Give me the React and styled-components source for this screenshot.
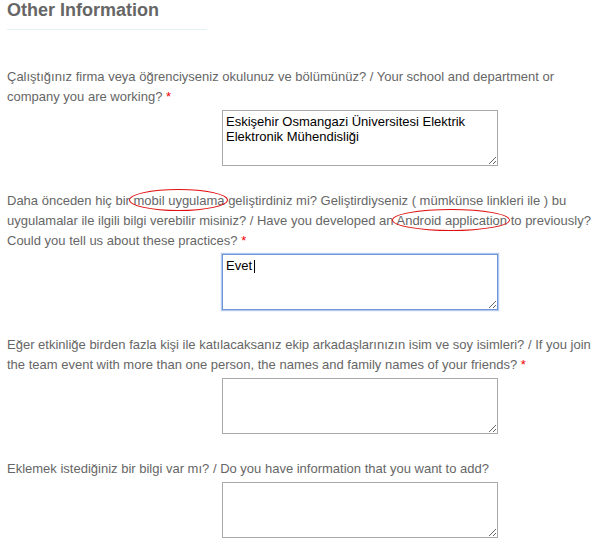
import React from 'react';
import styled, { createGlobalStyle, css } from 'styled-components';

const GlobalStyle = createGlobalStyle`
  html, body {
    margin: 0;
    padding: 0;
    background: #fff;
  }
  body {
    font-family: "Liberation Sans", Arial, sans-serif;
  }
`;

const Section = styled.section`
  padding: 0 8px 0 7px;
  width: 590px;
`;

const Heading = styled.h2`
  margin: 0;
  width: 200px;
  padding-bottom: 8px;
  border-bottom: 1px solid #e3f1f7;
  font-size: 18px;
  line-height: 21px;
  font-weight: bold;
  color: #666;
`;

const Form = styled.form`
  display: flex;
  flex-direction: column;
  gap: 25px;
  margin-top: 37px;
`;

const Question = styled.div`
  display: flex;
  flex-direction: column;
  gap: 3px;
`;

const Label = styled.label`
  font-size: 13px;
  line-height: 20px;
  color: #666;
`;

const Required = styled.span`
  color: #e00;
`;

// red hand-drawn style ring around a phrase
const Marked = styled.span`
  position: relative;

  &::after {
    content: '';
    position: absolute;
    top: -4px;
    bottom: -3px;
    left: -4px;
    right: -3px;
    border: 1px solid #e01010;
    border-radius: 50%;
    pointer-events: none;
  }
`;

const FieldWrap = styled.div`
  position: relative;
  margin-left: 215px;
  width: 276px;
  height: 56px;
`;

const TextArea = styled.textarea`
  box-sizing: border-box;
  display: block;
  width: 100%;
  height: 100%;
  margin: 0;
  padding: 3px;
  border: 1px solid #a8a8a8;
  border-radius: 0;
  font-family: "Liberation Sans", Arial, sans-serif;
  font-size: 13px;
  line-height: 15px;
  color: #000;
  background: #fff;
  outline: none;
  resize: both;

  ${(p) =>
    p.$focused &&
    css`
      border-color: #6f96d6;
      box-shadow: 0 0 1px 1px #b3c9ee;
    `}
`;

const Caret = styled.span`
  position: absolute;
  top: 6px;
  left: ${(p) => p.$x}px;
  width: 1px;
  height: 13px;
  background: #000;
`;

const questions = [
  {
    label: (
      <>
        Çalıştığınız firma veya öğrenciyseniz okulunuz ve bölümünüz? / Your school and department or company you are working?
      </>
    ),
    required: true,
    value: 'Eskişehir Osmangazi Üniversitesi Elektrik Elektronik Mühendisliği',
  },
  {
    label: (
      <>
        Daha önceden hiç bir <Marked>mobil uygulama</Marked> geliştirdiniz mi? Geliştirdiyseniz ( mümkünse linkleri ile ) bu
        uygulamalar ile ilgili bilgi verebilir misiniz? / Have you developed an <Marked>Android application</Marked> to
        previously? Could you tell us about these practices?
      </>
    ),
    required: true,
    value: 'Evet',
    focused: true,
  },
  {
    label: (
      <>
        Eğer etkinliğe birden fazla kişi ile katılacaksanız ekip arkadaşlarınızın isim ve soy isimleri? / If you join the
        team event with more than one person, the names and family names of your friends?
      </>
    ),
    required: true,
    value: '',
  },
  {
    label: <>Eklemek istediğiniz bir bilgi var mı? / Do you have information that you want to add?</>,
    required: false,
    value: '',
  },
];

export default function App() {
  return (
    <>
      <GlobalStyle />
      <Section>
        <Heading>Other Information</Heading>
        <Form onSubmit={(e) => e.preventDefault()}>
          {questions.map((q, i) => (
            <Question key={i}>
              <Label>
                {q.label}
                {q.required && <Required> *</Required>}
              </Label>
              <FieldWrap>
                <TextArea defaultValue={q.value} $focused={q.focused} />
                {q.focused && <Caret $x={32} />}
              </FieldWrap>
            </Question>
          ))}
        </Form>
      </Section>
    </>
  );
}
